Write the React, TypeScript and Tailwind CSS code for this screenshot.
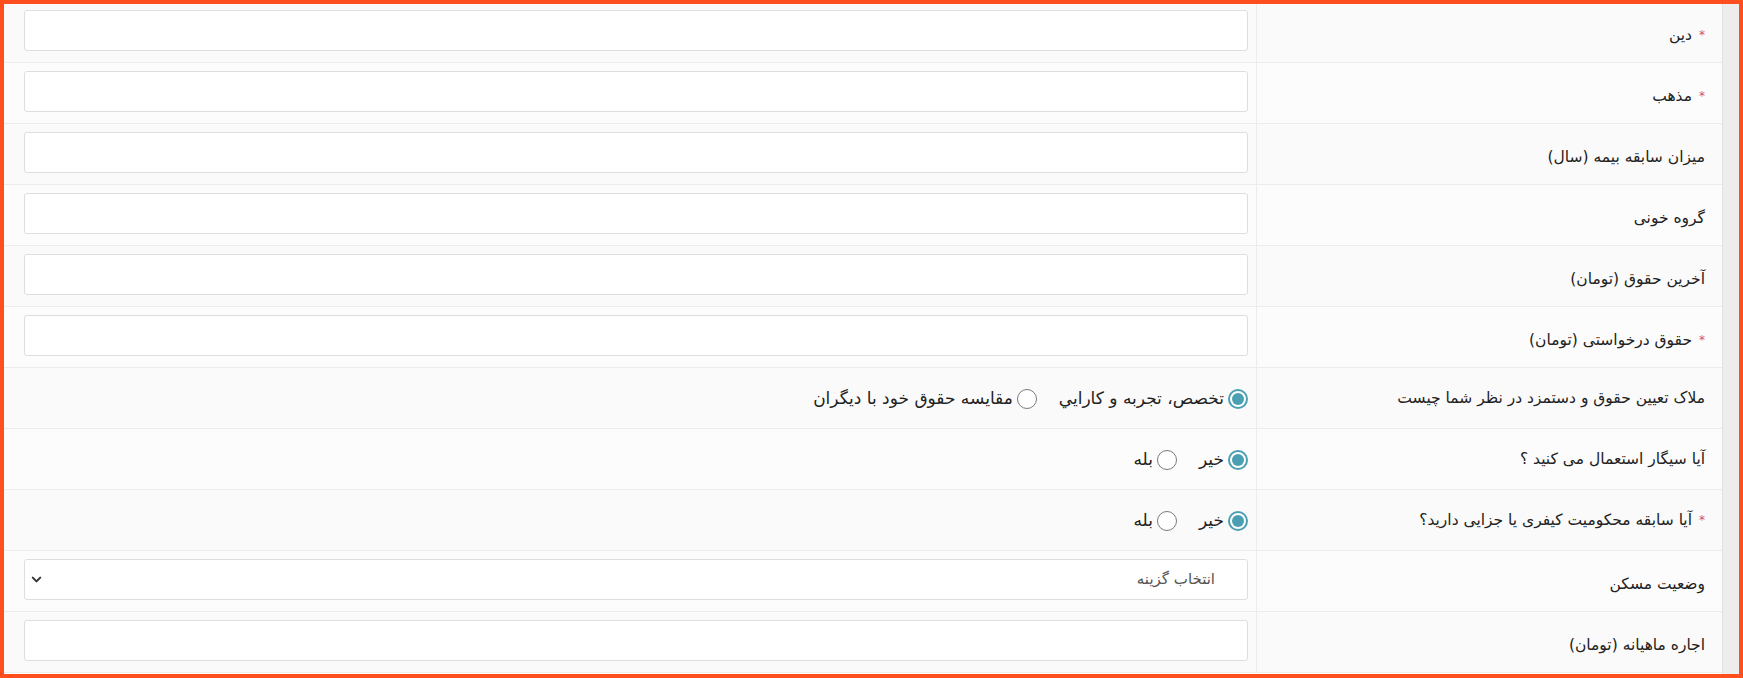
import React from 'react';

type Row =
  | { label: string; required?: boolean; kind: 'input' }
  | { label: string; required?: boolean; kind: 'select'; placeholder: string }
  | { label: string; required?: boolean; kind: 'radio'; options: string[]; checked: number };

const rows: Row[] = [
  { label: 'دین', required: true, kind: 'input' },
  { label: 'مذهب', required: true, kind: 'input' },
  { label: 'میزان سابقه بیمه (سال)', kind: 'input' },
  { label: 'گروه خونی', kind: 'input' },
  { label: 'آخرین حقوق (تومان)', kind: 'input' },
  { label: 'حقوق درخواستی (تومان)', required: true, kind: 'input' },
  {
    label: 'ملاک تعیین حقوق و دستمزد در نظر شما چیست',
    kind: 'radio',
    options: ['تخصص، تجربه و کارايي', 'مقایسه حقوق خود با دیگران'],
    checked: 0,
  },
  { label: 'آیا سیگار استعمال می کنید ؟', kind: 'radio', options: ['خیر', 'بله'], checked: 0 },
  { label: 'آیا سابقه محکومیت کیفری یا جزایی دارید؟', required: true, kind: 'radio', options: ['خیر', 'بله'], checked: 0 },
  { label: 'وضعیت مسکن', kind: 'select', placeholder: 'انتخاب گزینه' },
  { label: 'اجاره ماهیانه (تومان)', kind: 'input' },
];

const Radio: React.FC<{ on: boolean }> = ({ on }) =>
  on ? (
    <span className="flex h-[20px] w-[20px] shrink-0 items-center justify-center rounded-full border-2 border-[#4b9fb3] bg-white">
      <span className="h-[12px] w-[12px] rounded-full bg-[#4b9fb3]" />
    </span>
  ) : (
    <span className="h-[20px] w-[20px] shrink-0 rounded-full border-[1.5px] border-[#7a7a7a] bg-white" />
  );

const App: React.FC = () => {
  return (
    <div
      dir="rtl"
      className="relative flex h-[678px] w-full overflow-hidden bg-white text-[#222]"
      style={{ fontFamily: '"DejaVu Sans", "Noto Sans", sans-serif' }}
    >
      {/* scrollbar track (right side) */}
      <div className="w-[21px] shrink-0 border-l border-[#e2e2e2] bg-[#ededed]" />

      <div className="mt-[2px] flex-1">
        {rows.map((row, i) => (
          <div
            key={i}
            className={`flex h-[61px] border-b border-[#ececec] ${i % 2 === 0 ? 'bg-[#fafafa]' : 'bg-[#fcfcfc]'}`}
          >
            <div
              className={`flex w-[466px] shrink-0 items-center border-l border-[#ececec] pr-[17px] text-[15.5px] ${
                row.kind === 'radio' ? 'pt-[2px]' : 'pt-[8px]'
              }`}
            >
              {row.required && <span className="ml-[7px] -mt-[3px] text-[12px] text-[#d9534f]">*</span>}
              <span>{row.label}</span>
            </div>

            <div className="flex flex-1 items-start pl-[24px] pr-[8px] pt-[8px]">
              {row.kind === 'input' && (
                <div className="h-[41px] w-full rounded-[3px] border border-[#dedede] bg-white" />
              )}
              {row.kind === 'select' && (
                <div className="flex h-[41px] w-full items-center justify-between rounded-[3px] border border-[#dedede] bg-white pl-[4px] pr-[32px] text-[15px] text-[#555]">
                  <span>{row.placeholder}</span>
                  <svg width="15" height="15" viewBox="0 0 24 24" fill="none" stroke="#333" strokeWidth="3.2" strokeLinecap="round" strokeLinejoin="round">
                    <path d="M6 9l6 6 6-6" />
                  </svg>
                </div>
              )}
              {row.kind === 'radio' && (
                <div className="flex h-[45px] items-center gap-[22px] text-[17px]">
                  {row.options.map((opt, j) => (
                    <label key={j} className="flex items-center gap-[4px]">
                      <Radio on={j === row.checked} />
                      <span>{opt}</span>
                    </label>
                  ))}
                </div>
              )}
            </div>
          </div>
        ))}
      </div>

      {/* screenshot frame */}
      <div className="pointer-events-none absolute inset-0 border-4 border-[#ff4f1f]" />
    </div>
  );
};

export default App;
